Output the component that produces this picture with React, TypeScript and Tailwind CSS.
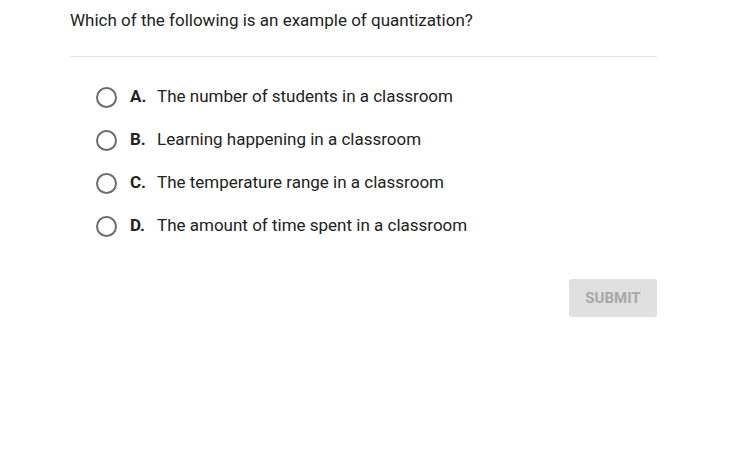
const OPTIONS = [
  { letter: 'A.', text: 'The number of students in a classroom' },
  { letter: 'B.', text: 'Learning happening in a classroom' },
  { letter: 'C.', text: 'The temperature range in a classroom' },
  { letter: 'D.', text: 'The amount of time spent in a classroom' },
];

export default function App() {
  return (
    <main className="h-[458px] w-[750px] bg-white font-['Roboto',sans-serif] text-[#222222]">
      <div className="ml-[70px] w-[587px]">
        <h1 className="pt-[9px] pb-[25px] text-[17px] leading-[22px]">
          Which of the following is an example of quantization?
        </h1>
        <div className="h-px bg-[#e6e6e6]" />

        <ul className="mt-[29px] flex flex-col gap-[21px] pl-[26px]">
          {OPTIONS.map((o) => (
            <li key={o.letter} className="flex h-[22px] items-center">
              <span className="h-[21px] w-[21px] shrink-0 rounded-full border-2 border-[#6b6b6b]" />
              <span className="ml-[13px] w-[27px] text-[17px] font-bold">{o.letter}</span>
              <span className="text-[17px]">{o.text}</span>
            </li>
          ))}
        </ul>

        <div className="mt-[42px] flex justify-end">
          <button
            type="button"
            disabled
            className="h-[38px] w-[88px] rounded-[3px] bg-[#e0e0e0] text-[15px] font-bold text-[#a8a8a8]"
          >
            SUBMIT
          </button>
        </div>
      </div>
    </main>
  );
}
